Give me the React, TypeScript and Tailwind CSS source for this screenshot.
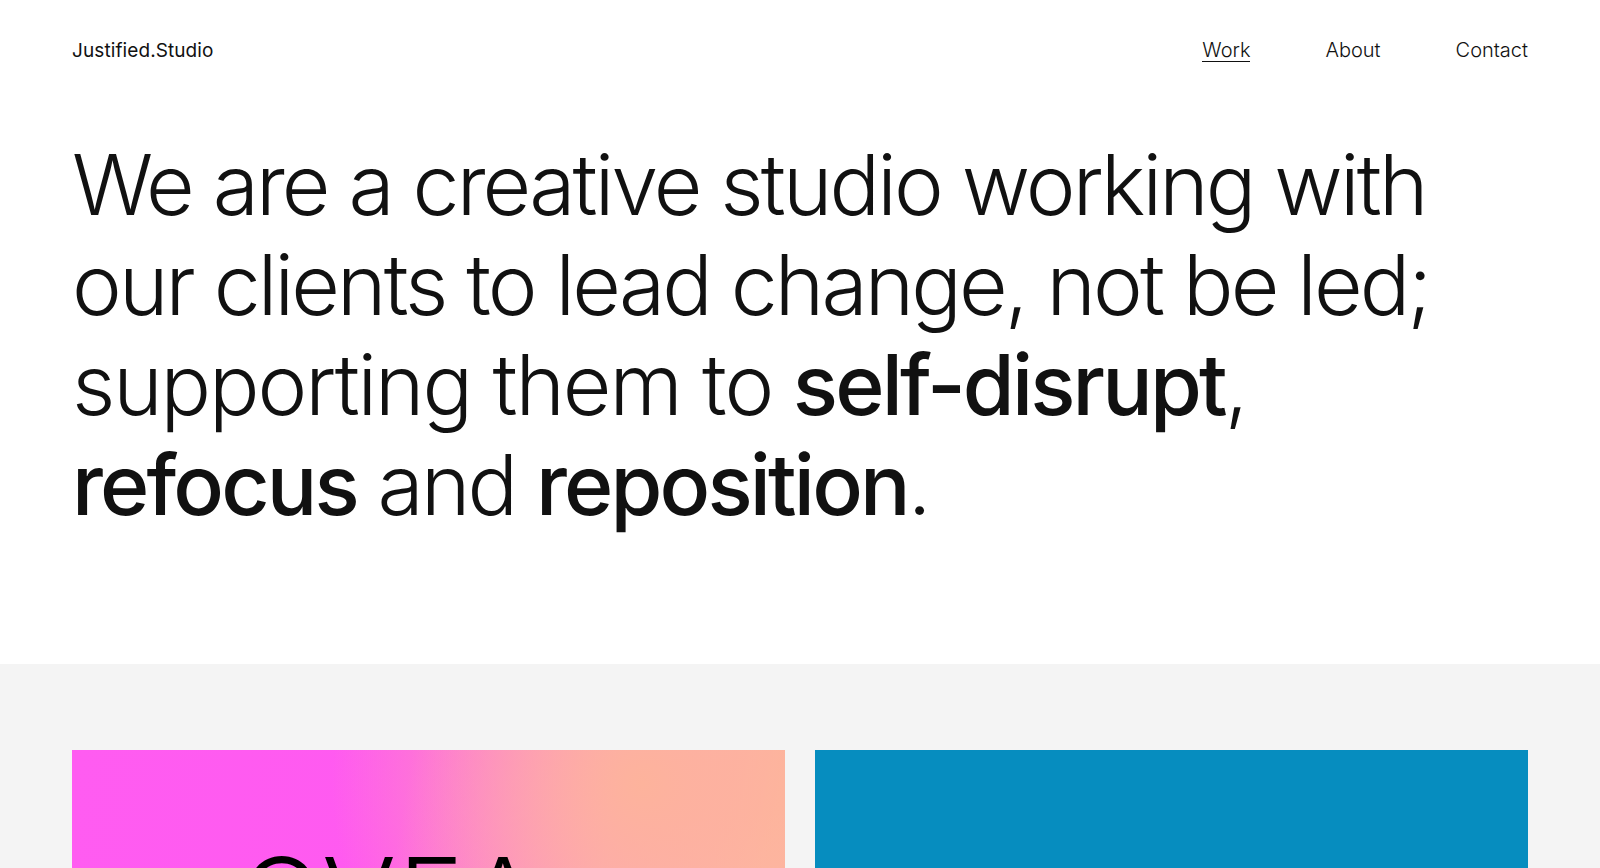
import { ReactNode } from 'react';

const navItems = ['Work', 'About', 'Contact'];

function Strong({ children }: { children: ReactNode }) {
  return <span className="font-medium">{children}</span>;
}

export default function App() {
  return (
    <div className="min-h-screen bg-white text-[#111] font-['Inter',_'Liberation_Sans',_sans-serif] overflow-hidden">
      {/* Top bar */}
      <header className="h-[100px] px-[72px] flex items-center justify-between">
        <span className="text-[19px] tracking-[0.005em] text-[#111] pt-[2px]">Justified.Studio</span>
        <nav className="flex items-center gap-[75px] text-[20px] font-light">
          {navItems.map((item, i) => (
            <a
              key={item}
              className={i === 0 ? 'border-b-[1.5px] border-[#111] leading-[22px]' : 'leading-[22px] border-b-[1.5px] border-transparent'}
            >
              {item}
            </a>
          ))}
        </nav>
      </header>

      {/* Intro */}
      <section className="px-[72px] pt-[35px] pb-[129px]">
        <h1 className="text-[84px] leading-[100px] font-light tracking-[-0.034em] text-[#111]">
          We are a creative studio working with
          <br />
          our clients to lead change, not be led;
          <br />
          <span className="tracking-[-0.025em]">supporting them to</span> <Strong>self-disrupt</Strong>,
          <br />
          <Strong>refocus</Strong> and <Strong>reposition</Strong>.
        </h1>
      </section>

      {/* Work grid */}
      <section className="bg-[#f4f4f4] px-[72px] pt-[86px] pb-[80px]">
        <div className="grid grid-cols-2 gap-[30px]">
          <div className="h-[560px] relative overflow-hidden bg-[radial-gradient(circle_at_80%_6%,#fdb39c_0%,rgba(253,179,156,0)_40%),radial-gradient(circle_at_100%_100%,#ffc3c3_0%,rgba(255,195,195,0)_55%),linear-gradient(100deg,#ff5cf1_0%,#ff5af0_42%,#fd9fc0_68%,#fdb59e_88%)]">
            <div className="pl-[168px] pt-[92px] text-[110px] leading-none tracking-[0.02em] font-light text-black">
              OVEA
            </div>
          </div>
          <div className="h-[560px] bg-[#068dbf]" />
        </div>
      </section>
    </div>
  );
}
